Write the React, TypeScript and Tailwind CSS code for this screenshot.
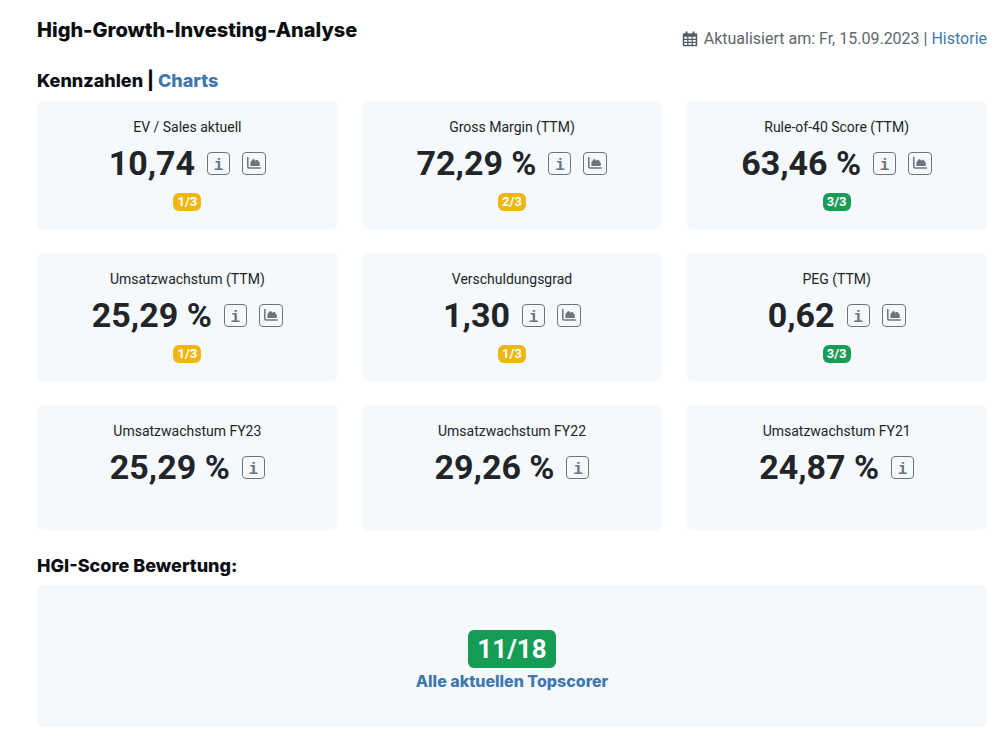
type Metric = {
  label: string;
  value: string;
  score?: string;
  full?: boolean;
};

const metrics: Metric[] = [
  { label: "EV / Sales aktuell", value: "10,74", score: "1/3" },
  { label: "Gross Margin (TTM)", value: "72,29 %", score: "2/3" },
  { label: "Rule-of-40 Score (TTM)", value: "63,46 %", score: "3/3", full: true },
  { label: "Umsatzwachstum (TTM)", value: "25,29 %", score: "1/3" },
  { label: "Verschuldungsgrad", value: "1,30", score: "1/3" },
  { label: "PEG (TTM)", value: "0,62", score: "3/3", full: true },
  { label: "Umsatzwachstum FY23", value: "25,29 %" },
  { label: "Umsatzwachstum FY22", value: "29,26 %" },
  { label: "Umsatzwachstum FY21", value: "24,87 %" },
];

const iconButton =
  "flex h-[23px] items-center justify-center rounded border border-[#6c757d] text-[#6c757d]";

function CalendarIcon() {
  return (
    <svg viewBox="0 0 16 16" className="mr-1.5 h-4 w-4" fill="none" stroke="#545b62" aria-hidden="true">
      <path d="M1.5 3.5h13v11h-13z" strokeWidth="1.5" strokeLinejoin="round" />
      <path d="M1 2.5h14v3.2H1z" fill="#545b62" stroke="none" />
      <path d="M4.5 0.5v3M11.5 0.5v3" strokeWidth="2" />
      <path d="M5.8 5v9.5M10.2 5v9.5M1.5 8.4h13M1.5 11.4h13" strokeWidth="1.2" />
    </svg>
  );
}

function AreaChartIcon() {
  return (
    <svg viewBox="0 0 14 14" className="h-3.5 w-3.5" aria-hidden="true">
      <path
        d="M0.8 1.5v9.2q0 1.3 1.3 1.3h11.2"
        fill="none"
        stroke="currentColor"
        strokeWidth="1.5"
        strokeLinecap="round"
      />
      <path
        d="M3.4 9.8V6.4q0-.4.3-.7l2.2-2.4q.6-.6 1.2 0l1.4 1.5 1-.9q.6-.5 1.1.1l1.9 2.4q.3.3.3.8v2q0 .9-.9.9H3.9q-.5 0-.5-.3z"
        fill="currentColor"
      />
    </svg>
  );
}

function MetricCard({ label, value, score, full }: Metric) {
  return (
    <article
      className={`flex flex-col items-center rounded-md bg-[#f5f9fc] pt-4 text-[#212529] ${
        score ? "h-32" : "h-[125px]"
      }`}
    >
      <h3 className="text-sm leading-5">{label}</h3>
      <div className="mt-1 flex items-center">
        <span className="text-[34px] leading-11 font-bold whitespace-nowrap">{value}</span>
        <button
          type="button"
          aria-label={`Info: ${label}`}
          className={`ml-3 w-[23px] pt-1.5 font-['Liberation_Mono',monospace] text-base leading-none font-bold ${iconButton}`}
        >
          i
        </button>
        {score && (
          <button type="button" aria-label={`Chart: ${label}`} className={`ml-3 w-6 ${iconButton}`}>
            <AreaChartIcon />
          </button>
        )}
      </div>
      {score && (
        <span
          className={`mt-2 flex h-[18px] w-7 items-center justify-center rounded-md text-[13px] font-bold text-white ${
            full ? "bg-[#159c55]" : "bg-[#edb611]"
          }`}
        >
          {score}
        </span>
      )}
    </article>
  );
}

export default function App() {
  return (
    <main className="bg-white pt-4 pr-[17px] pb-4 pl-[37px] font-['Roboto',sans-serif]">
      <header className="flex items-start justify-between">
        <h1 className="font-['Inter',sans-serif] text-xl leading-7 font-extrabold text-[#0b0e11]">
          High-Growth-Investing-Analyse
        </h1>
        <p className="mt-[11px] flex items-center text-base leading-6 text-[#5f666d]">
          <CalendarIcon />
          <span>
            Aktualisiert am: Fr, 15.09.2023 |{" "}
            <a href="#historie" className="text-[#3f78ae]">
              Historie
            </a>
          </span>
        </p>
      </header>

      <h2 className="mt-4 font-['Inter',sans-serif] text-lg leading-7 font-extrabold text-[#0b0e11]">
        Kennzahlen |{" "}
        <a href="#charts" className="text-[#3f78ae]">
          Charts
        </a>
      </h2>

      <section className="mt-1.5 grid grid-cols-3 gap-6">
        {metrics.map((metric) => (
          <MetricCard key={metric.label} {...metric} />
        ))}
      </section>

      <h2 className="mt-[22px] font-['Inter',sans-serif] text-lg leading-7 font-extrabold text-[#0b0e11]">
        HGI-Score Bewertung:
      </h2>
      <section className="mt-[5px] flex flex-col items-center rounded-md bg-[#f5f9fc] pt-[45px] pb-[34px]">
        <span className="rounded-md bg-[#159c55] px-[9px] py-0.5 text-[26px] leading-[34px] font-bold text-white">
          11/18
        </span>
        <a
          href="#topscorer"
          className="mt-px font-['Inter',sans-serif] text-base leading-6 font-extrabold text-[#3f78ae]"
        >
          Alle aktuellen Topscorer
        </a>
      </section>
    </main>
  );
}
